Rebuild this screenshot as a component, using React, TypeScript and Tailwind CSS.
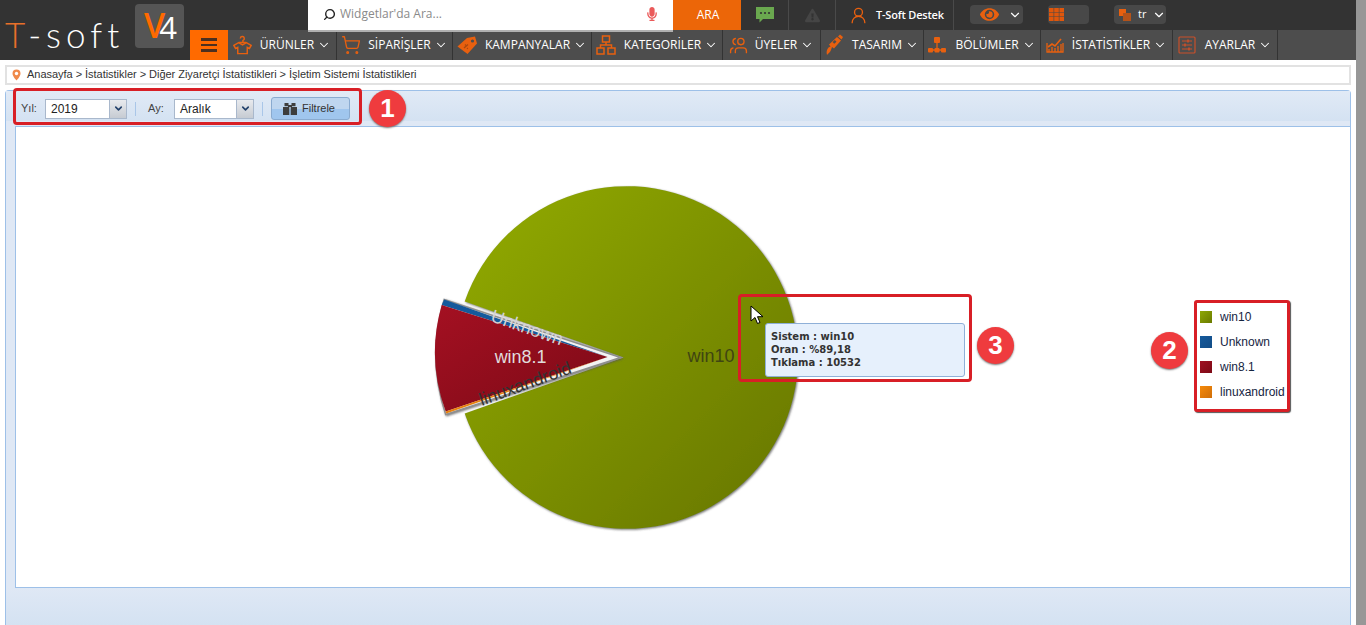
import { ReactNode } from 'react';
import { ChevronDown, Search, ShoppingCart, UserRound, Users } from 'lucide-react';
import { FaExclamationTriangle, FaEye, FaMicrophone } from 'react-icons/fa';

function ShirtIcon() {
  return (
    <svg width="19" height="20" viewBox="0 0 22 22" fill="none" stroke="#e8600f" strokeWidth="1.7">
      <path d="M8.5 3.5a2.3 2.3 0 1 1 3 2.2V8" />
      <path d="M7 8h8l6 3.5-2 3.5-2.5-1.2V21H5.5v-7.2L3 15l-2-3.5Z" />
      <path d="M6.5 8.3l4.5 2.7 4.5-2.7" />
    </svg>
  );
}

function TagIcon() {
  return (
    <svg width="21" height="19" viewBox="0 0 21 19">
      <path d="M0.5 10.5 10 2l8-1.5 2 7-9.5 10.5Z" fill="#e8600f" />
      <circle cx="15.5" cy="5" r="1.6" fill="#4d4d4d" />
      <path d="M7 12l4-3.5M8 8.5l.8.8M10 12l.8.8" stroke="#a8480f" strokeWidth="1.2" />
    </svg>
  );
}

function BrushIcon() {
  return (
    <svg width="20" height="22" viewBox="0 0 20 22">
      <path d="M2 21c-1-3 0-6 1.5-7.5l2-1-1.5-2L12 3l4 3.5-7 8-2-1.5-1 3c-.8 2-2.5 3.5-4 5Z" fill="#e8600f" />
      <path d="M13 2.5l2-2 3 2.5-1.5 2.5Z" fill="#e8600f" />
      <rect x="8" y="7" width="3" height="2.5" fill="#4d4d4d" transform="rotate(-40 9 8)" />
    </svg>
  );
}

function SitemapIcon() {
  return (
    <svg width="18" height="16" viewBox="0 0 18 16">
      <rect x="6" y="0" width="6" height="6" rx="1" fill="#e8600f" />
      <rect x="0" y="11" width="5" height="4.5" rx="1" fill="#e8600f" />
      <rect x="6.5" y="11" width="5" height="4.5" rx="1" fill="#e8600f" />
      <rect x="13" y="11" width="5" height="4.5" rx="1" fill="#e8600f" />
      <path d="M9 6v7M3 13h12" stroke="#e8600f" strokeWidth="1.3" />
    </svg>
  );
}

function CategoryIcon() {
  return (
    <svg width="20" height="20" viewBox="0 0 20 20" fill="none" stroke="#e8600f" strokeWidth="1.5">
      <rect x="6.5" y="1" width="7" height="6" />
      <rect x="1" y="13" width="7" height="6" />
      <rect x="12" y="13" width="7" height="6" />
      <path d="M10 7v3M4.5 13v-3h11v3" />
    </svg>
  );
}

function StatsIcon() {
  return (
    <svg width="18" height="16" viewBox="0 0 18 16" fill="none" stroke="#e8600f" strokeWidth="1.3">
      <path d="M1 6v9h16V6" />
      <path d="M2 10l4-3 3 2 6-7" strokeWidth="1.6" />
      <path d="M3 15v-3M6 15v-5M9 15v-4M12 15v-6M15 15v-8" />
    </svg>
  );
}

function SettingsIcon() {
  return (
    <svg width="18" height="18" viewBox="0 0 18 18" fill="none" stroke="#c9502a" strokeWidth="1.2">
      <rect x="1" y="1" width="16" height="16" rx="1" />
      <path d="M4 5h10M4 9h10M4 13h10" />
      <path d="M10 3.5v3M7 7.5v3M11 11.5v3" strokeWidth="1.6" />
    </svg>
  );
}

function ChatIcon() {
  return (
    <svg width="18" height="16" viewBox="0 0 18 16">
      <path d="M0 0h18v12H7l-3.5 3.5V12H0Z" fill="#6aa84f" />
      <circle cx="5" cy="6" r="1.1" fill="#333333" />
      <circle cx="9" cy="6" r="1.1" fill="#333333" />
      <circle cx="13" cy="6" r="1.1" fill="#333333" />
    </svg>
  );
}

function GridIcon() {
  return (
    <svg width="15" height="13" viewBox="0 0 15 13" fill="#e0570c">
      {[0, 4.5, 9].map((y) =>
        [0, 5.2, 10.4].map((x) => <rect key={`${x}-${y}`} x={x} y={y} width="4.6" height="4" />),
      )}
    </svg>
  );
}

function LangIcon() {
  return (
    <svg width="12" height="12" viewBox="0 0 12 12">
      <rect x="0" y="0" width="7" height="7" fill="#e8600f" />
      <rect x="4" y="4" width="8" height="8" fill="#b4531a" />
    </svg>
  );
}

function FilterIcon() {
  return (
    <svg width="14" height="13" viewBox="0 0 14 13" fill="#3d3d3d">
      <rect x="0" y="5" width="6.3" height="8" />
      <rect x="7.7" y="5" width="6.3" height="8" />
      <rect x="1.5" y="1" width="4" height="3.2" />
      <rect x="8.5" y="1" width="4" height="3.2" />
      <rect x="5" y="3" width="4" height="2" />
    </svg>
  );
}

const navItems: { label: string; width: string; icon: ReactNode; gap: string }[] = [
  { label: 'ÜRÜNLER', width: 'w-[109px]', gap: 'gap-[8px]', icon: <ShirtIcon /> },
  { label: 'SİPARİŞLER', width: 'w-[116px]', gap: 'gap-[7px]', icon: <ShoppingCart size={20} color="#e8600f" strokeWidth={1.6} /> },
  { label: 'KAMPANYALAR', width: 'w-[139px]', gap: 'gap-[7px]', icon: <TagIcon /> },
  { label: 'KATEGORİLER', width: 'w-[131px]', gap: 'gap-[8px]', icon: <CategoryIcon /> },
  { label: 'ÜYELER', width: 'w-[98px]', gap: 'gap-[7px]', icon: <Users size={19} color="#e8600f" strokeWidth={1.7} className="-scale-x-100" /> },
  { label: 'TASARIM', width: 'w-[103px]', gap: 'gap-[7px]', icon: <BrushIcon /> },
  { label: 'BÖLÜMLER', width: 'w-[117px]', gap: 'gap-[9px]', icon: <SitemapIcon /> },
  { label: 'İSTATİSTİKLER', width: 'w-[132px]', gap: 'gap-[8px]', icon: <StatsIcon /> },
  { label: 'AYARLAR', width: 'w-[105px]', gap: 'gap-[9px]', icon: <SettingsIcon /> },
];

function TopBar() {
  return (
    <div className="flex h-[30px] pl-[118px] bg-[#333333] text-white">
      <div className="relative z-10 flex items-center w-[365px] h-[32px] pb-[2px] bg-white border-b-2 border-[#b0b0b0]">
        <Search size={13} color="#222222" strokeWidth={2.6} className="ml-[15px] -scale-x-100" />
        <span className="ml-[4px] text-[12px] text-[#8a8a8a] font-['Open_Sans',sans-serif]">Widgetlar'da Ara...</span>
        <FaMicrophone size={14} color="#ea5a5a" className="ml-auto mr-[14px]" />
      </div>
      <div className="flex items-center justify-center w-[68px] pl-[2px] bg-[#ec6608] text-[12px] font-['Open_Sans',sans-serif]">ARA</div>
      <div className="flex items-center justify-center w-[48px] border-r border-[#4a4a4a]">
        <ChatIcon />
      </div>
      <div className="flex items-center justify-center w-[47px] border-r border-[#4a4a4a]">
        <FaExclamationTriangle size={15} color="#454545" />
      </div>
      <div className="flex items-center w-[118px] pl-[13px] gap-[8px] border-r border-[#4a4a4a]">
        <UserRound size={19} color="#e8600f" strokeWidth={1.7} />
        <span className="text-[11px] font-semibold tracking-[-0.2px] font-['Open_Sans',sans-serif]">T-Soft Destek</span>
      </div>
      <div className="flex items-center h-[19px] mt-[5px] ml-[16px] w-[53px] pl-[10px] rounded bg-[#484848]">
        <FaEye size={19} color="#e8600f" />
        <ChevronDown size={14} className="ml-auto mr-[1px]" />
      </div>
      <div className="flex items-center h-[19px] mt-[5px] ml-[25px] w-[41px] pl-[1px] rounded bg-[#484848]">
        <GridIcon />
      </div>
      <div className="flex items-center h-[19px] mt-[5px] ml-[25px] w-[52px] pl-[5px] rounded bg-[#484848]">
        <LangIcon />
        <span className="ml-[7px] text-[11px] font-['Open_Sans',sans-serif]">tr</span>
        <ChevronDown size={14} className="ml-auto" />
      </div>
    </div>
  );
}

function NavBar() {
  return (
    <div className="flex h-[30px] bg-[#4d4d4d]">
      <div className="flex flex-col items-center justify-center gap-[3px] w-[38px] bg-[#ff6a00]">
        <span className="w-[16px] h-[2.5px] bg-[#4d3020]" />
        <span className="w-[16px] h-[2.5px] bg-[#4d3020]" />
        <span className="w-[16px] h-[2.5px] bg-[#4d3020]" />
      </div>
      {navItems.map((item) => (
        <div
          key={item.label}
          className={`flex items-center justify-center ${item.gap} ${item.width} border-r border-[#333333] text-white text-[12px] font-['Open_Sans',sans-serif]`}
        >
          {item.icon}
          <span className="flex items-center gap-[3px]">
            {item.label}
            <ChevronDown size={14} strokeWidth={1.8} />
          </span>
        </div>
      ))}
    </div>
  );
}

function Header() {
  return (
    <div className="flex h-[60px] bg-[#333333]">
      <div className="flex items-center w-[190px] pl-[5px]">
        <div className="w-[130px] text-white text-[35px] leading-none font-light tracking-[5px] mt-[9px] whitespace-nowrap font-['Lato',sans-serif]">
          <span className="text-[#e8702a]">T</span>-soft
        </div>
        <div className="flex items-center justify-center w-[49px] h-[44px] -mt-[8px] pr-[4px] rounded bg-[#555555] tracking-[-6px] font-['Open_Sans',sans-serif]">
          <span className="text-[#ff6a00] text-[34px] font-semibold leading-none -mt-[2px]">V</span>
          <span className="text-white text-[31px] leading-none mt-[3px]">4</span>
        </div>
      </div>
      <div className="flex-1">
        <TopBar />
        <NavBar />
      </div>
    </div>
  );
}

function Select({ value, width }: { value: string; width: string }) {
  return (
    <div className={`flex h-[20px] ${width} bg-white border border-[#a9b8cc]`}>
      <span className="flex-1 pl-[5px] text-[12px] leading-[19px] text-[#222222] font-['Liberation_Sans',sans-serif]">{value}</span>
      <div className="flex items-center justify-center w-[17px] bg-gradient-to-b from-[#e8eaee] to-[#c6cbd2] border-l border-[#a9b8cc]">
        <ChevronDown size={11} color="#23416b" strokeWidth={3.5} />
      </div>
    </div>
  );
}

function Toolbar() {
  return (
    <div className="flex items-center h-[30px] pl-[15px] pt-[5px] bg-gradient-to-b from-[#e1eaf6] to-[#d4e2f2] text-[11px] text-[#444444] font-['Liberation_Sans',sans-serif]">
      <span className="w-[24px]">Yıl:</span>
      <Select value="2019" width="w-[82px]" />
      <span className="w-px h-[14px] ml-[8px] bg-[#a9c6e8]" />
      <span className="w-[26px] ml-[12px]">Ay:</span>
      <Select value="Aralık" width="w-[80px]" />
      <span className="w-px h-[14px] ml-[8px] bg-[#a9c6e8]" />
      <div className="flex items-center justify-center gap-[5px] w-[79px] h-[23px] ml-[8px] pr-[3px] rounded-[3px] border border-[#8aabd0] bg-[linear-gradient(#bfd6ef_50%,#a0c6ee_50%)] text-[#333333]">
        <FilterIcon />
        Filtrele
      </div>
    </div>
  );
}

function PieChart() {
  return (
    <svg viewBox="15 127 1335 460" className="block w-full h-full">
      <defs>
        <linearGradient id="g-green" x1="0" y1="0" x2="1" y2="1">
          <stop offset="0" stopColor="#92ab06" />
          <stop offset="1" stopColor="#667500" />
        </linearGradient>
        <linearGradient id="g-red" x1="0" y1="0" x2="1" y2="1">
          <stop offset="0" stopColor="#a41022" />
          <stop offset="1" stopColor="#7c0a16" />
        </linearGradient>
        <filter id="soft" x="-10%" y="-10%" width="120%" height="120%">
          <feDropShadow dx="1" dy="1" stdDeviation="1.2" floodColor="#555555" floodOpacity="0.8" />
        </filter>
      </defs>
      {/* win10 */}
      <path d="M623 357.5 L464 301.5 A171.5 171.5 0 1 1 464 413.5 Z" fill="url(#g-green)" filter="url(#soft)" />
      {/* exploded slices */}
      <path
        d="M620 357.5 L443.5 299.5 A190 190 0 0 0 445 414.5 Z"
        fill="#f2f2f2"
        stroke="#8f8f8f"
        strokeWidth="1.5"
        filter="url(#soft)"
      />
      <path d="M607 357 L443.5 299.5 L441 305 Z" fill="#155a9c" />
      <path d="M607 357 L441 305 A171 171 0 0 0 445 411.5 Z" fill="url(#g-red)" />
      <path d="M607 357 L445 411.5 L445.5 413.5 Z" fill="#e8800c" />
      <g fontFamily="'Liberation Sans', sans-serif" fontSize="18">
        <text x="687" y="362" fill="#3f4512">win10</text>
        <text x="494" y="363" fill="#e0dcdc">win8.1</text>
        <text x="489" y="321" fill="#d4d4d4" transform="rotate(19 489 321)">Unknown</text>
        <text x="481" y="406" fill="#333333" transform="rotate(-20 481 406)">linuxandroid</text>
      </g>
    </svg>
  );
}

function Panel() {
  return (
    <div className="flex-1 flex flex-col min-h-0 ml-[5px] mr-[5px] mt-[5px] border border-b-0 border-[#9dc0e8] rounded-t-[4px] bg-[#dfe8f5]">
      <Toolbar />
      <div className="h-[5px] bg-[#dfe8f5]" />
      <div className="h-[462px] ml-[9px] bg-white border border-r-0 border-[#9dc0e8]">
        <PieChart />
      </div>
      <div className="flex-1 bg-gradient-to-b from-[#dfe8f5] to-[#d4e2f2]" />
    </div>
  );
}

function Callout({ n, className }: { n: number; className: string }) {
  return (
    <div
      className={`absolute flex items-center justify-center w-[37px] h-[37px] rounded-full bg-[#ef3b3e] text-white text-[26px] font-bold shadow-[0_1px_2px_#777] font-['Liberation_Sans',sans-serif] ${className}`}
    >
      {n}
    </div>
  );
}

const legend = [
  { label: 'win10', color: 'from-[#8fa806] to-[#6a7a00]' },
  { label: 'Unknown', color: 'from-[#155a9c] to-[#124c86]' },
  { label: 'win8.1', color: 'from-[#a01022] to-[#7c0a16]' },
  { label: 'linuxandroid', color: 'from-[#f58a0a] to-[#d06e08]' },
];

function Overlays() {
  return (
    <>
      <div className="absolute left-[13px] top-[88px] w-[349px] h-[37px] rounded-[4px] border-[3px] border-[#d81f26]" />
      <Callout n={1} className="left-[369px] top-[90px]" />

      <div className="absolute left-[1194px] top-[300px] flex flex-col gap-[10px] w-[96px] h-[112px] pl-[3px] pt-[6px] rounded-[3px] border-[3px] border-[#d81f26] shadow-[1px_1px_1px_#555] bg-white">
        {legend.map((l) => (
          <div key={l.label} className="flex items-center h-[15px] gap-[8px] text-[12px] text-[#15243f] whitespace-nowrap font-['Liberation_Sans',sans-serif]">
            <span className={`w-[12px] h-[12px] bg-gradient-to-br ${l.color}`} />
            {l.label}
          </div>
        ))}
      </div>
      <Callout n={2} className="left-[1151px] top-[332px]" />

      <div className="absolute left-[738px] top-[294px] w-[234px] h-[88px] rounded-[4px] border-[3px] border-[#d81f26]" />
      <div className="absolute left-[765px] top-[323px] w-[200px] h-[54px] pl-[5px] pt-[6px] rounded-[3px] border border-[#8fb0d8] bg-[#e6f0fc] text-[10px] leading-[13px] font-bold text-[#333333] font-['DejaVu_Sans',sans-serif]">
        <div>Sistem : win10</div>
        <div>Oran : %89,18</div>
        <div>Tıklama : 10532</div>
      </div>
      <Callout n={3} className="left-[977px] top-[327px]" />

      <svg className="absolute left-[750px] top-[305px]" width="14" height="20" viewBox="0 0 14 20">
        <path d="M1 1v15l4-3.5 2.5 6 2.5-1-2.5-5.8H13Z" fill="#ffffff" stroke="#000000" strokeWidth="1" />
      </svg>
    </>
  );
}

export default function App() {
  return (
    <div className="relative flex h-[625px] overflow-hidden bg-white">
      <div className="flex flex-col w-[1356px]">
        <Header />
        <div className="flex items-center h-[20px] mt-[5px] ml-[5px] mr-[5px] pl-[5px] pb-[1px] gap-[6px] border-2 border-[#e2e2e2] text-[11px] tracking-[-0.03px] text-[#333333] font-['Liberation_Sans',sans-serif]">
          <svg width="9" height="12" viewBox="0 0 9 12">
            <path d="M4.5 0.5a4 4 0 0 1 4 4c0 3-4 7-4 7s-4-4-4-7a4 4 0 0 1 4-4Z" fill="#f08a4b" />
            <circle cx="4.5" cy="4.5" r="1.7" fill="#ffffff" />
          </svg>
          Anasayfa &gt; İstatistikler &gt; Diğer Ziyaretçi İstatistikleri &gt; İşletim Sistemi İstatistikleri
        </div>
        <Panel />
      </div>
      <div className="w-[10px] bg-[#979797]" />
      <Overlays />
    </div>
  );
}
